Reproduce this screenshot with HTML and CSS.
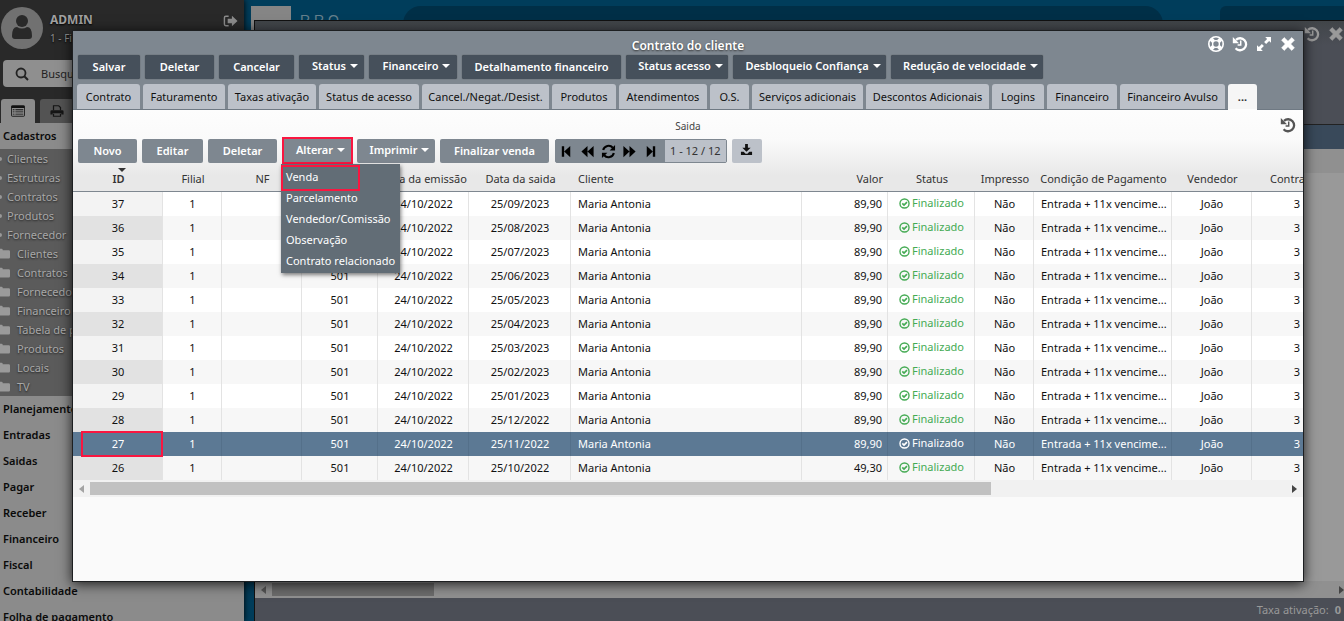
FILE: index.html
```html
<!DOCTYPE html>
<html lang="pt-BR">
<head>
<meta charset="utf-8">
<title>Contrato do cliente</title>
<link rel="stylesheet" href="styles.css">
</head>
<body>
<svg class="sprite" aria-hidden="true">
  <symbol id="i-history" viewBox="0 0 16 16"><path d="M4 3.9A6 6 0 1 1 3.600 12.200" fill="none" stroke="currentColor" stroke-width="2.300"/><path d="M.8 1V7.200H7z" fill="currentColor"/><path d="M8.700 4.600v4.300H5.600" fill="none" stroke="currentColor" stroke-width="1.500"/></symbol>
  <symbol id="i-ring" viewBox="0 0 16 16"><circle cx="8" cy="8" r="7.200" fill="none" stroke="currentColor" stroke-width="1.600"/><circle cx="8" cy="8" r="3.400" fill="none" stroke="currentColor" stroke-width="1.400"/><path d="M5.600 5.600 3.200 3.200M10.400 5.600l2.400-2.400M5.600 10.400l-2.400 2.400M10.400 10.400l2.400 2.400" stroke="currentColor" stroke-width="4"/></symbol>
  <symbol id="i-expand" viewBox="0 0 16 16"><path d="M9.200 1H15v5.800l-1.900-1.900-3 3L8.100 5.900l3-3zM6.800 15H1V9.200l1.900 1.900 3-3 2 2-3 3z" fill="currentColor"/></symbol>
  <symbol id="i-close" viewBox="0 0 16 16"><path d="m4.200 1.600 3.800 3.700 3.800-3.700 2.600 2.600L10.700 8l3.700 3.800-2.600 2.600L8 10.700l-3.800 3.700-2.600-2.600L5.300 8 1.600 4.200z" fill="currentColor" stroke="currentColor" stroke-width=".6" stroke-linejoin="round"/></symbol>
  <symbol id="i-folder" viewBox="0 0 16 16"><path d="M0 3.500Q0 2 1.500 2h4Q7 2 7 3.500V4h7.500Q16 4 16 5.500v7q0 1.500-1.500 1.500h-13Q0 14 0 12.500z" fill="currentColor"/></symbol>
  <symbol id="i-check" viewBox="0 0 16 16"><circle cx="8" cy="8" r="6.600" fill="none" stroke="currentColor" stroke-width="2"/><path d="m4.800 7.700 2.500 2.500 4.300-4.300" fill="none" stroke="currentColor" stroke-width="2.400"/></symbol>
</svg>

<div class="app">
  <aside class="side">
    <header class="user">
      <svg class="avatar" viewBox="0 0 42 42" aria-hidden="true"><circle cx="21" cy="21" r="21" fill="#717171"/><circle cx="21" cy="14" r="6" fill="#292929"/><path d="M11 29q0-9 5-9 5 3 10 0 5 0 5 9 0 3-3 3H14q-3 0-3-3z" fill="#292929"/></svg>
      <div class="who"><strong>ADMIN</strong><span>1 - Filial</span></div>
      <button class="bare exit" aria-label="Sair"><svg viewBox="0 0 16 14"><path d="M6 2H3Q1.500 2 1.500 3.500v7Q1.500 12 3 12h3" fill="none" stroke="currentColor" stroke-width="1.500"/><path d="M5 4.700h4.500V1.500L15.500 7l-6 5.500V9.300H5z" fill="currentColor"/></svg></button>
    </header>
    <label class="search"><svg viewBox="0 0 14 14" aria-hidden="true"><circle cx="6" cy="6" r="4.500" fill="none" stroke="#222" stroke-width="1.800"/><path d="m9.300 9.300 3.700 3.700" stroke="#222" stroke-width="2"/></svg><input type="text" placeholder="Busque um menu" aria-label="Buscar"></label>
    <div class="sidetabs">
      <button class="on" aria-label="Menu"><svg viewBox="0 0 16 14"><path d="M1.500 1h13q1 0 1 1v10q0 1-1 1h-13q-1 0-1-1V2q0-1 1-1z" fill="none" stroke="#111"/><path d="M.5 1h15v2.500H.5zM2 5h2v1H2zm3 0h9v1H5zM2 7.500h2v1H2zm3 0h9v1H5zM2 10h2v1H2zm3 0h9v1H5z" fill="#111"/></svg></button>
      <button aria-label="Imprimir"><svg viewBox="0 0 16 14"><path d="M4 6V1h6l2 2v3M4 10v3h8v-3" fill="none" stroke="#151515" stroke-width="1.400"/><path d="M2 6h12q1.500 0 1.500 1.500V11H13V9.500H3V11H.5V7.500Q.5 6 2 6z" fill="#151515"/></svg></button>
    </div>
    <nav class="menu">
      <a class="group" href="#">Cadastros</a>
      <div class="sub" id="sub"></div>
      <a class="group" href="#">Planejamento</a>
      <a class="group" href="#">Entradas</a>
      <a class="group" href="#">Saidas</a>
      <a class="group" href="#">Pagar</a>
      <a class="group" href="#">Receber</a>
      <a class="group" href="#">Financeiro</a>
      <a class="group" href="#">Fiscal</a>
      <a class="group" href="#">Contabilidade</a>
      <a class="group" href="#">Folha de pagamento</a>
    </nav>
  </aside>
  <main class="desk">
    <div class="brand"><span class="logo"></span><span class="word">R R O —</span><span class="pill"></span><span class="block"></span></div>
  </main>
</div>

<section class="backwin" aria-hidden="true">
  <div class="backhead"><svg><use href="#i-history"/></svg><svg><use href="#i-close"/></svg></div>
  <div class="backband"></div>
  <div class="backbody"></div>
  <div class="hbar dim"><i class="arr left"></i><span class="thumb"></span><i class="arr right"></i></div>
  <div class="backfoot">Taxa ativação:<b>0</b></div>
</section>

<section class="win" role="dialog" aria-labelledby="ttl">
  <header class="head">
    <div class="titlebar">
      <h1 id="ttl">Contrato do cliente</h1>
      <div class="ctrls">
        <button class="bare" aria-label="Ajuda"><svg><use href="#i-ring"/></svg></button>
        <button class="bare" aria-label="Histórico"><svg><use href="#i-history"/></svg></button>
        <button class="bare" aria-label="Expandir"><svg><use href="#i-expand"/></svg></button>
        <button class="bare" aria-label="Fechar"><svg><use href="#i-close"/></svg></button>
      </div>
    </div>
    <div class="actions">
      <button>Salvar</button><button>Deletar</button><button>Cancelar</button><button class="drop">Status</button><button class="drop">Financeiro</button><button>Detalhamento financeiro</button><button class="drop">Status acesso</button><button class="drop">Desbloqueio Confiança</button><button class="drop">Redução de velocidade</button>
    </div>
    <div class="tabs">
      <button>Contrato</button><button>Faturamento</button><button>Taxas ativação</button><button>Status de acesso</button><button>Cancel./Negat./Desist.</button><button>Produtos</button><button>Atendimentos</button><button>O.S.</button><button>Serviços adicionais</button><button>Descontos Adicionais</button><button>Logins</button><button>Financeiro</button><button>Financeiro Avulso</button><button class="on">...</button>
    </div>
  </header>

  <div class="panel">
    <div class="caption"><span>Saida</span><button class="bare hist" aria-label="Histórico"><svg><use href="#i-history"/></svg></button></div>
    <div class="tools">
      <button>Novo</button><button>Editar</button><button>Deletar</button>
      <div class="holder"><button class="drop">Alterar</button>
        <ul class="pop"><li class="mark"><a href="#">Venda</a></li><li><a href="#">Parcelamento</a></li><li><a href="#">Vendedor/Comissão</a></li><li><a href="#">Observação</a></li><li><a href="#">Contrato relacionado</a></li></ul>
      </div>
      <button class="drop">Imprimir</button><button>Finalizar venda</button>
      <div class="pager">
        <button class="bare" aria-label="Primeira"><svg viewBox="0 0 16 16"><path d="M3 2.500h2.500V8L12 2v12L5.500 8v5.500H3z" fill="#000"/></svg></button>
        <button class="bare" aria-label="Anterior"><svg viewBox="0 0 16 16"><path d="M8 2v12L1.500 8zM14.500 2v12L8 8z" fill="#000"/></svg></button>
        <button class="bare" aria-label="Atualizar"><svg viewBox="0 0 16 16"><path d="M2.300 6.500A6 6 0 0 1 12.600 4M13.700 9.500A6 6 0 0 1 3.400 12" fill="none" stroke="#000" stroke-width="2.200"/><path d="M15 1v5.800H9.200zM1 15V9.200h5.800z" fill="#000"/></svg></button>
        <button class="bare" aria-label="Próxima"><svg viewBox="0 0 16 16"><path d="M8 2v12l6.500-6zM1.500 2v12L8 8z" fill="#000"/></svg></button>
        <button class="bare" aria-label="Última"><svg viewBox="0 0 16 16"><path d="M13 2.500h-2.500V8L4 2v12l6.500-6v5.500H13z" fill="#000"/></svg></button>
        <output>1 - 12 / 12</output>
      </div>
      <button class="down" aria-label="Exportar"><svg viewBox="0 0 14 14"><path d="M5.500 1h3v4h3L7 9.500 2.500 5h3zM1 9.500h3l2 2h2l2-2h3V13H1z" fill="#111"/></svg></button>
    </div>
    <div class="scroll">
    <table>
      <colgroup><col class="c90"><col class="c59"><col class="c80"><col class="c76"><col class="c91"><col class="c102"><col><col class="c86"><col class="c87"><col class="c59"><col class="c138"><col class="c80"><col class="c51"></colgroup>
      <thead><tr><th class="sorted">ID</th><th>Filial</th><th>NF</th><th></th><th>Data da emissão</th><th>Data da saida</th><th class="l">Cliente</th><th class="r">Valor</th><th>Status</th><th>Impresso</th><th>Condição de Pagamento</th><th>Vendedor</th><th class="cut">Contra</th></tr></thead>
      <tbody id="rows"></tbody>
    </table>
    </div>
    <div class="hbar"><i class="arr left"></i><span class="thumb"></span><i class="arr right"></i></div>
  </div>
</section>
<script src="app.js"></script>
</body>
</html>
```
FILE: styles.css
```css
* { box-sizing: border-box; }
body { margin: 0; height: 100vh; overflow: hidden; position: relative; font: 11px/16px "Noto Sans", "Open Sans", sans-serif; color: #111; background: #003a57; }
button, input { font: inherit; color: inherit; border: 0; padding: 0; margin: 0; background: none; white-space: nowrap; }
a { color: inherit; text-decoration: none; }
svg { display: block; width: 16px; height: 16px; }
.sprite { position: absolute; width: 0; height: 0; }

/* Application shell */
.app { display: flex; height: 100%; }
.side { width: 244px; flex: none; background: #292929; display: flex; flex-direction: column; overflow: hidden; box-shadow: 0 0 6px #000; z-index: 1; }
.side > * { flex: none; }
.user { display: flex; gap: 7px; padding: 7px 6px 0 1px; height: 60px; color: #8c8c8c; text-shadow: 0 1px 2px #000; }
.avatar { width: 42px; height: 42px; }
.who { flex: 1; display: flex; flex-direction: column; gap: 2px; padding-top: 5px; font-size: 10px; }
.who strong { font-size: 12px; color: #a0a0a0; }
.exit { align-self: flex-start; padding-top: 7px; }
.exit svg { width: 15px; height: 14px; }
.search { display: flex; align-items: center; gap: 12px; height: 27px; margin: 0 6px 12px 3px; padding: 0 12px; border-radius: 4px; background: #8f8f8f; }
.search svg { width: 14px; height: 14px; flex: none; }
.search input { flex: 1; min-width: 0; }
.search input::placeholder { color: #222; opacity: 1; }
.sidetabs { display: flex; gap: 5px; padding-left: 1px; height: 24px; }
.sidetabs button { width: 34px; display: grid; place-items: center; border-radius: 3px 3px 0 0; background: #535353; }
.sidetabs .on { background: #8b8b8b; }
.sidetabs svg { width: 14px; height: 14px; }
.side .menu { background: #8b8b8b; flex: 1; }
.group { display: block; line-height: 26px; padding-left: 3px; font-weight: 600; color: #0a0a0a; }
.sub { background: #5b5b5b; color: #a8a8a8; text-shadow: 0 1px 2px #222; }
.sub a { display: flex; align-items: center; gap: 5px; height: 19px; }
.sub a::before { content: ""; width: 2px; height: 4px; background: #999; border-radius: 0 2px 2px 0; }
.sub .dir { gap: 7px; margin-left: -3px; }
.sub .dir::before { display: none; }
.sub svg { width: 13px; height: 13px; color: #9a9a9a; }
.desk { flex: 1; background: #003d5b; overflow: hidden; }
.brand { display: flex; padding: 6px 0 0 7px; height: 34px; color: #66808c; }
.logo { width: 40px; height: 30px; background: #858585; }
.word { font: 14px/24px "Liberation Sans", sans-serif; padding: 2px 0 0 9px; width: 112px; white-space: nowrap; }
.pill { flex: 1; background: #002f47; border-radius: 18px 18px 0 0; margin-right: 57px; }
.block { flex: none; width: 124px; background: #002f47; border-radius: 6px 0 0 0; }

/* Window behind the dialog */
.backwin { position: absolute; inset: 20px 0 0 254px; display: flex; flex-direction: column; border: 1px solid #111; border-width: 1px 0 0 1px; background: #999; }
.backhead { height: 103px; display: flex; justify-content: flex-end; gap: 8px; padding-top: 5px; color: #9a9a9a; background: linear-gradient(#414549, #4b4e56 24px); overflow: hidden; }
.backhead svg { flex: none; }
.backband { height: 25px; background: #39495a; border-top: 1px solid #222; }
.backbody { flex: 1; border-top: 24px solid #909090; background: #999; }
.backfoot { height: 23px; display: flex; justify-content: flex-end; gap: 6px; padding: 4px 3px; color: #999; background: #4b4e56; }

/* Dialog */
.win { position: absolute; inset: 30px 40px 39px 72px; z-index: 2; display: flex; flex-direction: column; border: 1px solid #1d1f21; background: #fafafa; box-shadow: 0 2px 12px rgba(0, 0, 0, .8); }
.head { background: #7e8790; padding: 0 4px; border-bottom: 1px solid #6f7983; }
.titlebar { display: grid; grid-template-columns: 1fr auto 1fr; height: 24px; color: #fff; }
.titlebar h1 { grid-column: 2; margin: 0; font-size: 12px; font-weight: 600; line-height: 29px; text-shadow: 0 1px 2px #333; }
.ctrls { display: flex; gap: 8px; justify-content: flex-end; align-items: flex-start; padding: 5px 3px 0 0; }
.actions { display: grid; grid-template-columns: 62px 69px 75px 65px 88px 159px 102px 153px 152px; gap: 5px; padding-left: 1px; }
.tools { display: grid; grid-template-columns: 59px 61px 69px 70px 78px 109px auto 30px; justify-content: start; gap: 5px; }
.actions button, .tools > button, .holder > button { height: 24px; border-radius: 2px; font-weight: 600; color: #fff; background: #46505b; }
.actions button { box-shadow: 0 0 1px #333; }
.drop::after { content: ""; display: inline-block; margin-left: 4px; border: 4px solid transparent; border-top-color: #fff; border-bottom: 0; vertical-align: 2px; }
.actions .drop, .tools .drop { padding: 0 0 2px 7px; }
.tabs { display: grid; grid-template-columns: 63px 82px 88px 100px 127px 64px 88px 39px 111px 123px 52px 70px 105px 29px; gap: 3px; padding-top: 5px; margin-bottom: -1px; }
.tabs button { height: 26px; border-radius: 3px 3px 0 0; background: #bcc1c9; border-bottom: 1px solid #6f7983; }
.tabs .on { background: #f6f6f6; border-color: #fdfdfd; font-weight: bold; color: #333; }
.panel { background: linear-gradient(#fdfdfd, #fafafa 30px, #e8e8e8 65px, #e8e8e8 82px, #fafafa 82px); }
.caption { display: grid; grid-template-columns: 1fr auto 1fr; height: 28px; padding-top: 7px; font-size: 10px; line-height: 18px; color: #444; }
.caption span { grid-column: 2; }
.hist { justify-self: end; align-self: start; margin-right: 7px; color: #555; }
.tools { padding-left: 5px; height: 26px; align-items: center; }
.tools > button, .holder > button { background: #7e8790; }
.holder { position: relative; display: grid; }
.holder::after { content: ""; position: absolute; inset: -2px -1px -1px 0; border: 2px solid #fa1640; pointer-events: none; }
.pop { position: absolute; z-index: 3; top: 25px; left: -1px; margin: 0; padding: 2px 0; list-style: none; background: #626d76; color: #fff; box-shadow: 1px 2px 4px rgba(0, 0, 0, .5); white-space: nowrap; }
.pop li { position: relative; line-height: 21px; padding: 0 5px; }
.mark::after { content: ""; position: absolute; inset: -1px 40px -4px 0; border: 2px solid #fa1640; }
.pager { display: flex; height: 24px; margin-left: 1px; border-radius: 2px; background: #7e8790; border: 1px solid #7e8790; }
.pager button { width: 21px; padding: 0 3px; }
.pager svg { width: 15px; height: 15px; }
.pager output { line-height: 22px; padding: 0 5px; margin-left: 4px; background: #bcc1c9; color: #333; }
.tools .down { background: #bcc1c9; padding: 0 8px 3px; }
.down svg { width: 13px; height: 13px; }

.scroll { overflow: hidden; }
table { width: 100%; table-layout: fixed; border-collapse: separate; border-spacing: 0; }
.c90 { width: 90px; } .c59 { width: 59px; } .c80 { width: 80px; } .c76 { width: 76px; } .c91 { width: 91px; } .c102 { width: 102px; }
.c86 { width: 86px; } .c87 { width: 87px; } .c138 { width: 138px; } .c51 { width: 51px; }
th, td { height: 24px; padding: 0 0 0 1px; text-align: center; white-space: nowrap; overflow: hidden; font-weight: normal; }
th { height: 28px; padding-top: 3px; color: #333; border-bottom: 1px solid #7e8790; }
.sorted { font-weight: 600; position: relative; }
.sorted::before { content: ""; position: absolute; top: 4px; left: 45px; border: 4px solid transparent; border-top: 4px solid #333; border-bottom: 0; }
td { border-right: 1px solid #e3e3e3; background: #fff; }
td:last-child { border-right: 0; }
tr:nth-child(even) td { background: #f7f7f7; }
td:first-child { background: #f3f3f3; position: relative; overflow: visible; }
tr:nth-child(even) td:first-child { background: #e2e2e2; }
.l { text-align: left; padding-left: 7px; }
.r { text-align: right; padding-right: 5px; }
th.cut { text-align: left; padding-left: 18px; }
td.end { text-align: right; padding-right: 3px; }
.cond { text-align: left; padding-left: 7px; }
.ok span { display: inline-flex; align-items: center; gap: 2px; color: #45ab54; }
.ok svg { width: 11px; height: 11px; }
tbody tr.sel td, tbody tr.sel td:first-child { background: #5c7994; color: #fff; border-color: #54708a; }
.sel .ok span { color: #fff; }
tbody tr.sel td:first-child { z-index: 1; }
.sel td:first-child::after { content: ""; position: absolute; inset: -1px -1px -1px 8px; border: 2px solid #fa1640; }

.hbar { height: 17px; display: flex; align-items: center; padding: 0 6px; background: #f1f1f1; }
.hbar .thumb { width: 74%; height: 13px; margin: 0 auto 0 6px; background: #c1c1c1; }
.arr { border: 4px solid transparent; }
.left { border-right: 5px solid #a3a3a3; border-left: 0; }
.right { border-left: 5px solid #444; border-right: 0; }
.dim { background: #909090; padding-right: 0; }
.dim .thumb { width: 15%; background: #6b6b6b; }
.dim .left { border-right-color: #555; }
```
FILE: app.js
```js
const sub = [
  ['Clientes', 0], ['Estruturas', 0], ['Contratos', 0], ['Produtos', 0], ['Fornecedor', 0],
  ['Clientes', 1], ['Contratos', 1], ['Fornecedor', 1], ['Financeiro', 1], ['Tabela de preços', 1],
  ['Produtos', 1], ['Locais', 1], ['TV', 1]
];
document.getElementById('sub').innerHTML = sub.map(([name, dir]) =>
  dir ? `<a class="dir" href="#"><svg aria-hidden="true"><use href="#i-folder"/></svg>${name}</a>` : `<a href="#">${name}</a>`
).join('');

const sales = [
  [37, '25/09/2023'], [36, '25/08/2023'], [35, '25/07/2023'], [34, '25/06/2023'], [33, '25/05/2023'], [32, '25/04/2023'],
  [31, '25/03/2023'], [30, '25/02/2023'], [29, '25/01/2023'], [28, '25/12/2022'], [27, '25/11/2022'], [26, '25/10/2022']
];
document.getElementById('rows').innerHTML = sales.map(([id, date]) => `<tr class="${id === 27 ? 'sel' : ''}">
  <td>${id}</td><td>1</td><td></td><td>501</td><td>24/10/2022</td><td>${date}</td><td class="l">Maria Antonia</td>
  <td class="r">${id === 26 ? '49,30' : '89,90'}</td><td class="ok"><span><svg aria-hidden="true"><use href="#i-check"/></svg>Finalizado</span></td>
  <td>Não</td><td class="cond">Entrada + 11x vencime...</td><td>João</td><td class="end">3</td></tr>`).join('');
```
